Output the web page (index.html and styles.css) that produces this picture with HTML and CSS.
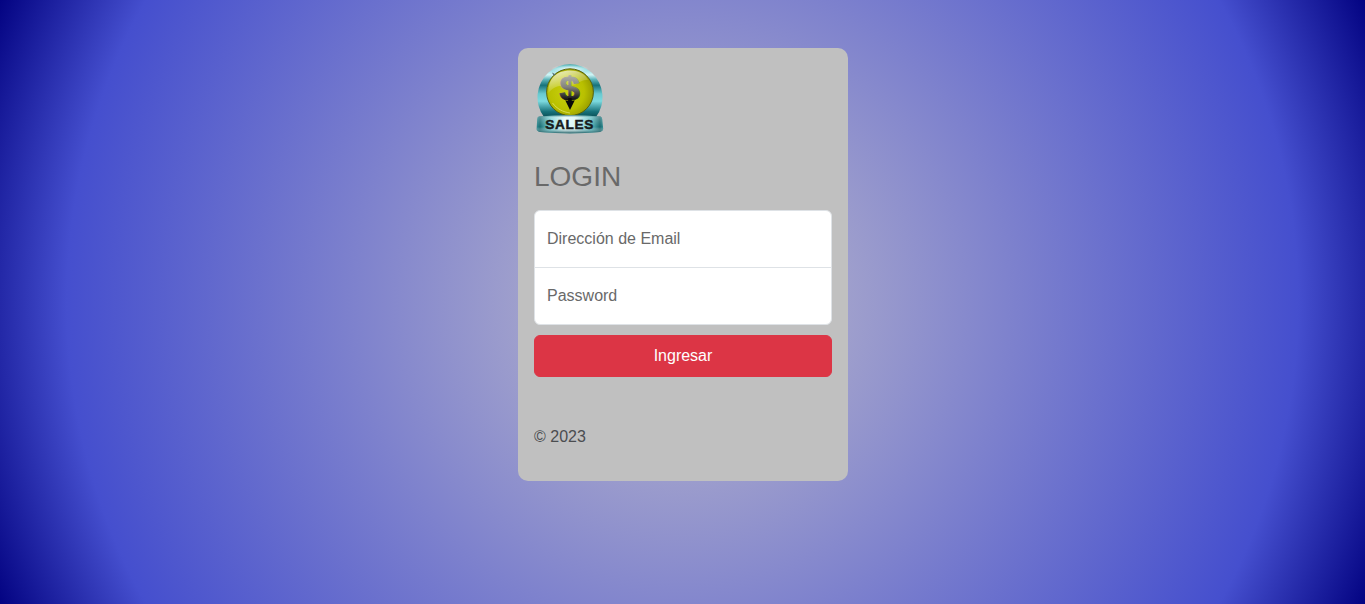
FILE: index.html
```html
<!DOCTYPE html>
<html lang="es">
<head>
<meta charset="utf-8">
<title>Login</title>
<link rel="stylesheet" href="styles.css">
</head>
<body>
<main class="card">
  <form class="form">
    <svg class="logo" viewBox="0 0 72 72" role="img" aria-label="Sales">
      <defs>
        <linearGradient id="ring" x1="0" y1="0" x2="0" y2="1">
          <stop offset="0" stop-color="#3fa9ae"/>
          <stop offset=".08" stop-color="#84d8dc"/>
          <stop offset=".2" stop-color="#d2f5f6"/>
          <stop offset=".29" stop-color="#5cb4ba"/>
          <stop offset=".4" stop-color="#17727b"/>
          <stop offset=".56" stop-color="#68c9cf"/>
          <stop offset=".7" stop-color="#7ddadf"/>
          <stop offset=".9" stop-color="#167079"/>
          <stop offset="1" stop-color="#0b5158"/>
        </linearGradient>
        <radialGradient id="shine" cx=".5" cy=".5" r=".5">
          <stop offset="0" stop-color="#fff" stop-opacity=".95"/>
          <stop offset="1" stop-color="#fff" stop-opacity="0"/>
        </radialGradient>
        <radialGradient id="gold" cx=".43" cy=".5" r=".58">
          <stop offset="0" stop-color="#c9d00d"/>
          <stop offset=".65" stop-color="#b9c000"/>
          <stop offset="1" stop-color="#969b00"/>
        </radialGradient>
        <linearGradient id="gloss" x1="0" y1="0" x2=".5" y2="1">
          <stop offset="0" stop-color="#fff" stop-opacity=".85"/>
          <stop offset=".9" stop-color="#fff" stop-opacity="0"/>
        </linearGradient>
        <linearGradient id="sign" gradientUnits="userSpaceOnUse" x1="0" y1="11" x2="0" y2="37">
          <stop offset="0" stop-color="#b0b0aa"/>
          <stop offset=".45" stop-color="#85857f"/>
          <stop offset="1" stop-color="#050505"/>
        </linearGradient>
        <linearGradient id="banner" x1="0" y1="0" x2="1" y2="0">
          <stop offset="0" stop-color="#2b8a90"/>
          <stop offset=".05" stop-color="#176d73"/>
          <stop offset=".2" stop-color="#74cfd3"/>
          <stop offset=".42" stop-color="#e6fafa"/>
          <stop offset=".58" stop-color="#d9f5f6"/>
          <stop offset=".82" stop-color="#58b9be"/>
          <stop offset=".95" stop-color="#17676e"/>
          <stop offset="1" stop-color="#2b8a90"/>
        </linearGradient>
        <linearGradient id="shade" x1="0" y1="0" x2="0" y2="1">
          <stop offset="0" stop-color="#0a5960" stop-opacity=".75"/>
          <stop offset=".13" stop-color="#fff" stop-opacity=".25"/>
          <stop offset=".65" stop-color="#fff" stop-opacity="0"/>
          <stop offset="1" stop-color="#064b52" stop-opacity=".9"/>
        </linearGradient>
      </defs>
      <path d="M10 53A32.5 33 0 1 1 62 53Z" fill="url(#ring)"/>
      <ellipse cx="36" cy="5" rx="19" ry="4.5" fill="url(#shine)"/>
      <circle cx="36" cy="28.2" r="23.4" fill="url(#gold)" stroke="#56610d" stroke-width="1"/>
      <path d="M14.5 29C14 15 22 6.5 36 6.5C46 6.5 52 11 54 16C46 15 43 22 35 22C26 21 20 22 14.5 29Z" fill="url(#gloss)"/>
      <path d="M18.5 39C23 45 29 48 36 49" fill="none" stroke="#eef18c" stroke-opacity=".6" stroke-width="1"/>
      <text class="dollar" x="25.6" y="36" textLength="20.4" lengthAdjust="spacingAndGlyphs">$</text>
      <path d="M34.2 34h3.4v3.1l3.2-.8L36 46l-4.8-9.7l3 .8z" fill="#090909"/>
      <path d="M18 8.5l4 2-2.5 1z" fill="#537276"/>
      <path d="M5 52.4Q36 50 66.5 52.4Q68 52.6 68.2 55L69.2 65Q69.2 67 66 68Q36 70.8 6 68Q2.5 67 2.6 65L3.2 55Q3.3 52.6 5 52.4Z" fill="url(#banner)"/>
      <path d="M5 52.4Q36 50 66.5 52.4Q68 52.6 68.2 55L69.2 65Q69.2 67 66 68Q36 70.8 6 68Q2.5 67 2.6 65L3.2 55Q3.3 52.6 5 52.4Z" fill="url(#shade)"/>
      <text class="sales" x="11.2" y="65.2">SALES</text>
    </svg>
    <h1 class="title">LOGIN</h1>
    <input class="field field-first" type="email" placeholder="Dirección de Email" aria-label="Dirección de Email">
    <input class="field field-last" type="password" placeholder="Password" aria-label="Password">
    <button class="submit" type="button">Ingresar</button>
    <p class="copyright">© 2023</p>
  </form>
</main>
</body>
</html>
```
FILE: styles.css
```css
* { box-sizing: border-box; }
html { height: 100%; }
body {
  min-height: 100%;
  margin: 0;
  padding-top: 48px;
  overflow: hidden;
  font: 16px/24px "Liberation Sans", Arial, sans-serif;
  background: radial-gradient(circle, rgb(191, 188, 204) 0%, rgb(69, 79, 206) 82.5%, rgb(3, 3, 130) 100%) no-repeat;
}
.card {
  width: 330px;
  height: 433px;
  margin: 0 auto 0 518px;
  padding: 16px;
  border-radius: 10px;
  background: silver;
}
.form { display: flex; flex-direction: column; }
.logo { display: block; width: 72px; height: 72px; margin-bottom: 24px; }
.dollar { font: bold 33px "Liberation Sans", Arial, sans-serif; fill: url(#sign); stroke: url(#sign); stroke-width: .8px; }
.sales { font: bold 13.6px "Liberation Sans", Arial, sans-serif; letter-spacing: .7px; fill: #171a1c; stroke: #171a1c; stroke-width: .5px; }
.title { margin: 0 0 17px; font-size: 28px; font-weight: 400; line-height: 33px; color: #696969; }
.field {
  width: 100%;
  height: 58px;
  padding: 16px 12px;
  border: 1px solid #dee2e6;
  background: #fff;
  font: inherit;
  color: #212529;
}
.field::placeholder { color: #696969; opacity: 1; }
.field-first { margin-bottom: -1px; border-radius: 6px 6px 0 0; }
.field-last { margin-bottom: 10px; border-radius: 0 0 6px 6px; }
.submit {
  height: 42px;
  padding: 8px 12px;
  border: 1px solid #dc3545;
  border-radius: 6px;
  background: #dc3545;
  font: inherit;
  color: #fff;
}
.copyright { margin: 48px 0 16px; color: #4b4d50; }
```
